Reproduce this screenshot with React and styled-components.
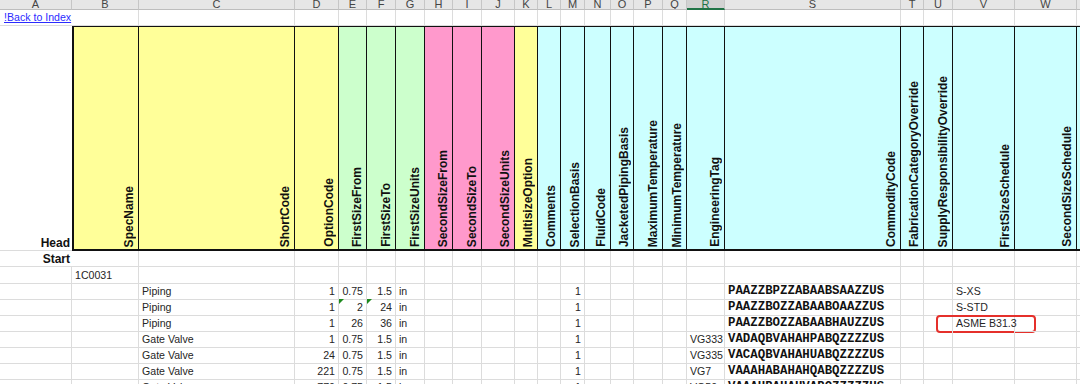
import React from 'react'
import styled, { createGlobalStyle } from 'styled-components'

const GlobalStyle = createGlobalStyle`
  body {
    margin: 0;
    background: #ffffff;
    overflow: hidden;
    font-family: "Liberation Sans", Arial, sans-serif;
  }
`

// column widths, A .. X
const widths = [72, 67, 156, 44, 28, 29, 29, 28, 29, 33, 23, 23, 24, 26, 23, 29, 24, 38, 176, 23, 29, 62, 62, 80]
const letters = ['A', 'B', 'C', 'D', 'E', 'F', 'G', 'H', 'I', 'J', 'K', 'L', 'M', 'N', 'O', 'P', 'Q', 'R', 'S', 'T', 'U', 'V', 'W', 'X']

const YELLOW = '#ffff99'
const GREEN = '#ccffcc'
const PINK = '#ff99cc'
const CYAN = '#ccffff'

const headers = [
    { name: 'SpecName', bg: YELLOW },
    { name: 'ShortCode', bg: YELLOW },
    { name: 'OptionCode', bg: YELLOW },
    { name: 'FirstSizeFrom', bg: GREEN },
    { name: 'FirstSizeTo', bg: GREEN },
    { name: 'FirstSizeUnits', bg: GREEN },
    { name: 'SecondSizeFrom', bg: PINK },
    { name: 'SecondSizeTo', bg: PINK },
    { name: 'SecondSizeUnits', bg: PINK },
    { name: 'MultisizeOption', bg: YELLOW },
    { name: 'Comments', bg: CYAN },
    { name: 'SelectionBasis', bg: CYAN },
    { name: 'FluidCode', bg: CYAN },
    { name: 'JacketedPipingBasis', bg: CYAN },
    { name: 'MaximumTemperature', bg: CYAN },
    { name: 'MinimumTemperature', bg: CYAN },
    { name: 'EngineeringTag', bg: CYAN },
    { name: 'CommodityCode', bg: CYAN },
    { name: 'FabricationCategoryOverride', bg: CYAN },
    { name: 'SupplyResponsibilityOverride', bg: CYAN },
    { name: 'FirstSizeSchedule', bg: CYAN },
    { name: 'SecondSizeSchedule', bg: CYAN },
    { name: '', bg: CYAN },
]

const rows = [
    { short: 'Piping', opt: '1', from: '0.75', to: '1.5', units: 'in', basis: '1', tag: '', code: 'PAAZZBPZZABAABSAAZZUS', sched: 'S-XS' },
    { short: 'Piping', opt: '1', from: '2', to: '24', units: 'in', basis: '1', tag: '', code: 'PAAZZBOZZABAABOAAZZUS', sched: 'S-STD', flag: true },
    { short: 'Piping', opt: '1', from: '26', to: '36', units: 'in', basis: '1', tag: '', code: 'PAAZZBOZZABAABHAUZZUS', sched: 'ASME B31.3', mark: true },
    { short: 'Gate Valve', opt: '1', from: '0.75', to: '1.5', units: 'in', basis: '1', tag: 'VG333', code: 'VADAQBVAHAHPABQZZZZUS', sched: '' },
    { short: 'Gate Valve', opt: '24', from: '0.75', to: '1.5', units: 'in', basis: '1', tag: 'VG335', code: 'VACAQBVAHAHUABQZZZZUS', sched: '' },
    { short: 'Gate Valve', opt: '221', from: '0.75', to: '1.5', units: 'in', basis: '1', tag: 'VG7', code: 'VAAAHABAHAHQABQZZZZUS', sched: '' },
    { short: 'Gate Valve', opt: '770', from: '0.75', to: '1.5', units: 'in', basis: '1', tag: 'VG50', code: 'VAAAHBAHAHVABQZZZZZUS', sched: '' },
]

const Sheet = styled.div`
  width: max-content;
  color: #262626;
  font-size: 10.6px;
`

const Row = styled.div`
  display: grid;
  grid-template-columns: ${widths.map((w) => w + 'px').join(' ')};
  height: ${(p) => p.$h}px;
`

const ColHead = styled.div`
  box-sizing: border-box;
  height: 10px;
  line-height: 9px;
  overflow: hidden;
  text-align: center;
  font-size: 11px;
  color: ${(p) => (p.$active ? '#217346' : '#444444')};
  background: ${(p) => (p.$active ? '#d2d2d2' : '#e6e6e6')};
  border-right: 1px solid #c6c6c6;
  border-bottom: ${(p) => (p.$active ? '2px solid #217346' : '1px solid #bdbdbd')};
`

const Cell = styled.div`
  position: relative;
  box-sizing: border-box;
  border-right: 1px solid #dcdcdc;
  border-bottom: 1px solid #dcdcdc;
  padding: 0 ${(p) => (p.$align === 'right' ? '3px' : '0')} 0 ${(p) => (p.$align === 'right' ? '0' : '3px')};
  text-align: ${(p) => p.$align || 'left'};
  line-height: 16px;
  white-space: nowrap;
  font-family: ${(p) => (p.$mono ? '"Liberation Mono", "Courier New", monospace' : 'inherit')};
  font-size: ${(p) => (p.$mono ? '12.4px' : 'inherit')};
  font-weight: ${(p) => (p.$mono ? 'bold' : 'normal')};
  color: ${(p) => (p.$mono ? '#111111' : 'inherit')};
`

const LabelCell = styled(Cell)`
  display: flex;
  justify-content: flex-end;
  align-items: flex-end;
  padding: 0 2px 0 0;
  font-size: 12px;
  font-weight: bold;
  color: #111111;
  border-right: none;
  line-height: 14px;
`

const LinkCell = styled(Cell)`
  border-right: none;
  padding-left: 4px;
  line-height: 15px;
  a {
    color: #2b2bff;
    text-decoration: underline;
    font-size: 10.6px;
  }
`

const HeadCell = styled.div`
  box-sizing: border-box;
  display: flex;
  justify-content: flex-end;
  align-items: flex-end;
  background: ${(p) => p.$bg};
  border-top: 2px solid #111111;
  border-bottom: 2px solid #111111;
  border-right: 1px solid #111111;
  border-left: ${(p) => (p.$first ? '2px solid #111111' : 'none')};
  padding: 0 2px 2px 0;
  overflow: hidden;
`

const VText = styled.span`
  writing-mode: vertical-rl;
  transform: rotate(180deg);
  font-size: 12px;
  font-weight: bold;
  line-height: 14px;
  color: #111111;
  white-space: nowrap;
`

const Flag = styled.span`
  position: absolute;
  left: 0;
  top: 0;
  width: 0;
  height: 0;
  border-top: 5px solid #1d8a1d;
  border-right: 5px solid transparent;
`

const Mark = styled.span`
  position: absolute;
  left: -17px;
  top: 0;
  width: 100px;
  height: 18px;
  box-sizing: border-box;
  border: 2px solid #e5302b;
  border-radius: 4px;
`

function App() {
    return (
        <>
            <GlobalStyle />
            <Sheet>
                <Row $h={10}>
                    {letters.map((l) => (
                        <ColHead key={l} $active={l === 'R'}>{l}</ColHead>
                    ))}
                </Row>

                <Row $h={15}>
                    <LinkCell><a href="#index">!Back to Index</a></LinkCell>
                    {letters.slice(1).map((l) => <Cell key={l} />)}
                </Row>

                <Row $h={226}>
                    <LabelCell>Head</LabelCell>
                    {headers.map((h, i) => (
                        <HeadCell key={i} $bg={h.bg} $first={i === 0}>
                            <VText>{h.name}</VText>
                        </HeadCell>
                    ))}
                </Row>

                <Row $h={16}>
                    <LabelCell>Start</LabelCell>
                    {letters.slice(1).map((l) => <Cell key={l} />)}
                </Row>

                <Row $h={16}>
                    <Cell />
                    <Cell>1C0031</Cell>
                    {letters.slice(2).map((l) => <Cell key={l} />)}
                </Row>

                {rows.map((r, i) => (
                    <Row $h={16} key={i}>
                        <Cell />
                        <Cell />
                        <Cell>{r.short}</Cell>
                        <Cell $align="right">{r.opt}</Cell>
                        <Cell $align="right">{r.flag && <Flag />}{r.from}</Cell>
                        <Cell $align="right">{r.flag && <Flag />}{r.to}</Cell>
                        <Cell>{r.units}</Cell>
                        <Cell />
                        <Cell />
                        <Cell />
                        <Cell />
                        <Cell />
                        <Cell $align="right">{r.basis}</Cell>
                        <Cell />
                        <Cell />
                        <Cell />
                        <Cell />
                        <Cell>{r.tag}</Cell>
                        <Cell $mono>{r.code}</Cell>
                        <Cell />
                        <Cell />
                        <Cell>{r.mark && <Mark />}{r.sched}</Cell>
                        <Cell />
                        <Cell />
                    </Row>
                ))}
            </Sheet>
        </>
    )
}

export default App
